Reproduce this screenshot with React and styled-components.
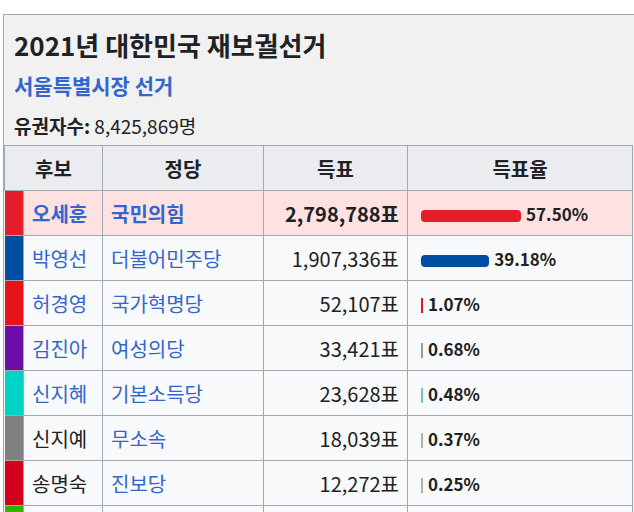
import React from "react";
import styled, { createGlobalStyle } from "styled-components";

const Global = createGlobalStyle`
  body { margin: 0; background: #fff; font-family: "Noto Sans CJK KR", "Noto Sans", sans-serif; color: #202122; }
`;

const Box = styled.div`
  margin: 14px 0 0 3px;
  width: 640px;
  border: 1px solid #a2a9b1;
  background: #f1f1f1;
  height: 520px;
  overflow: hidden;
`;

const Title = styled.div`
  font-size: 26px;
  font-weight: 700;
  padding: 10px 0 0 10px;
  line-height: 40px;
`;

const Sub = styled.div`
  font-size: 21px;
  font-weight: 700;
  color: #3366cc;
  padding: 4px 0 0 10px;
  line-height: 32px;
`;

const Voters = styled.div`
  font-size: 19px;
  padding: 10px 0 0 10px;
  line-height: 30px;
  b { font-weight: 700; }
`;

const Table = styled.table`
  border-collapse: collapse;
  table-layout: fixed;
  margin-top: 4px;
  width: 629px;
  font-size: 20px;
  td, th { border: 1px solid #a2a9b1; height: 44px; padding: 0 8px; }
  th { background: #eaecf0; font-weight: 700; text-align: center; }
`;

const Row = styled.tr`
  background: ${p => (p.win ? "#fee2e2" : "#f8f9fa")};
  font-weight: ${p => (p.win ? 700 : 400)};
`;

const Swatch = styled.td`
  && { padding: 0; background: ${p => p.c}; border-left: none; }
`;

const Link = styled.td`
  color: #3366cc;
  white-space: nowrap;
`;

const Plain = styled.td`
  white-space: nowrap;
`;

const Votes = styled.td`
  text-align: right;
  white-space: nowrap;
`;

const PctCell = styled.td`
  && { padding-left: 13px; }
  font-size: 17px;
  font-weight: 700;
  white-space: nowrap;
`;

const Bar = styled.span`
  display: inline-block;
  height: ${p => (p.thin ? 15 : 12)}px;
  border-radius: ${p => (p.thin ? 0 : 4)}px;
  background: ${p => p.c};
  vertical-align: middle;
  margin-right: 5px;
`;

const rows = [
  { name: "오세훈", party: "국민의힘", votes: "2,798,788표", pct: 57.5, label: "57.50%", c: "#e61e2b", win: true },
  { name: "박영선", party: "더불어민주당", votes: "1,907,336표", pct: 39.18, label: "39.18%", c: "#004ea2" },
  { name: "허경영", party: "국가혁명당", votes: "52,107표", pct: 1.07, label: "1.07%", c: "#e8121a", bar: "#e8121a" },
  { name: "김진아", party: "여성의당", votes: "33,421표", pct: 0.68, label: "0.68%", c: "#6b0ea8", bar: "#9a9a9a" },
  { name: "신지혜", party: "기본소득당", votes: "23,628표", pct: 0.48, label: "0.48%", c: "#00d2c3", bar: "#6cc7c0" },
  { name: "신지예", party: "무소속", votes: "18,039표", pct: 0.37, label: "0.37%", c: "#808080", bar: "#b0b0b0", plain: true },
  { name: "송명숙", party: "진보당", votes: "12,272표", pct: 0.25, label: "0.25%", c: "#d6001c", bar: "#b0b0b0", plain: true },
];

export default function App() {
  return (
    <>
      <Global />
      <Box>
        <Title>2021년 대한민국 재보궐선거</Title>
        <Sub>서울특별시장 선거</Sub>
        <Voters><b>유권자수:</b> 8,425,869명</Voters>
        <Table>
          <colgroup>
            <col style={{ width: 19 }} />
            <col style={{ width: 79 }} />
            <col style={{ width: 161 }} />
            <col style={{ width: 144 }} />
            <col />
          </colgroup>
          <thead>
            <tr>
              <th colSpan={2}>후보</th>
              <th>정당</th>
              <th>득표</th>
              <th>득표율</th>
            </tr>
          </thead>
          <tbody>
            {rows.map(r => {
              const thin = r.pct < 2;
              return (
                <Row key={r.name} win={r.win}>
                  <Swatch c={r.c} />
                  {r.plain ? <Plain>{r.name}</Plain> : <Link>{r.name}</Link>}
                  <Link>{r.party}</Link>
                  <Votes>{r.votes}</Votes>
                  <PctCell>
                    <Bar c={r.bar || r.c} thin={thin} style={{ width: thin ? 2 : r.pct * 1.74 }} />
                    {r.label}
                  </PctCell>
                </Row>
              );
            })}
            <Row>
              <Swatch c="#2db400" />
              <td /><td /><td /><td />
            </Row>
          </tbody>
        </Table>
      </Box>
    </>
  );
}
